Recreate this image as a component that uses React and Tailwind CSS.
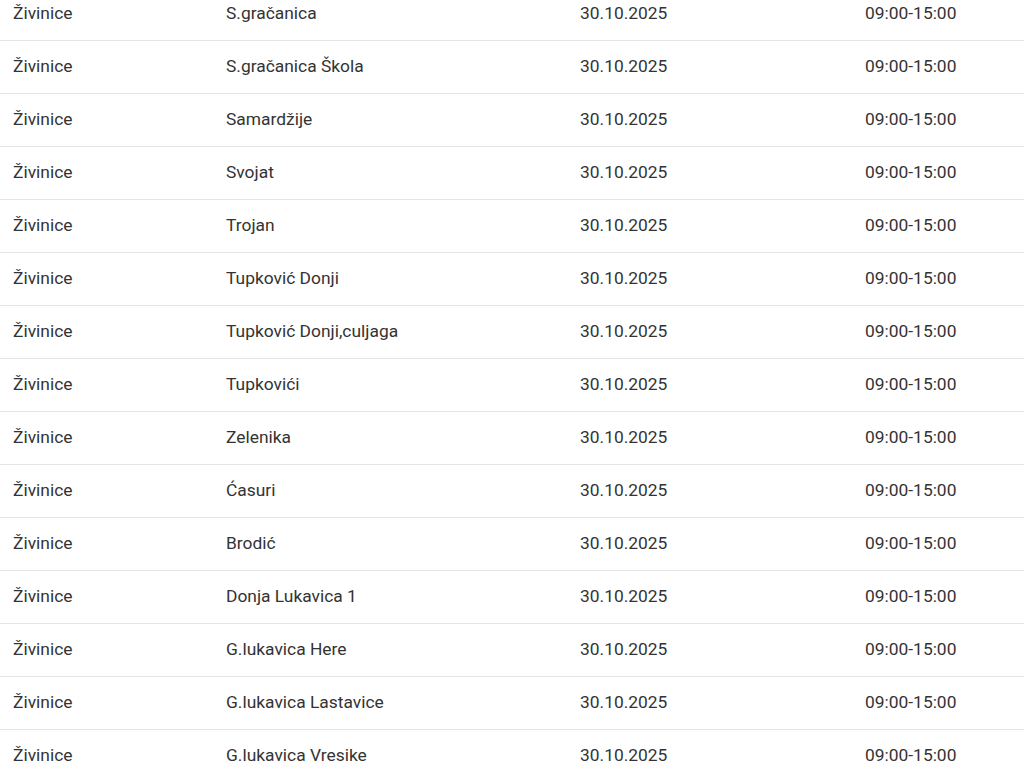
const places = [
  "S.gračanica",
  "S.gračanica Škola",
  "Samardžije",
  "Svojat",
  "Trojan",
  "Tupković Donji",
  "Tupković Donji,culjaga",
  "Tupkovići",
  "Zelenika",
  "Ćasuri",
  "Brodić",
  "Donja Lukavica 1",
  "G.lukavica Here",
  "G.lukavica Lastavice",
  "G.lukavica Vresike",
];

export default function App() {
  return (
    <div className="w-[1024px] h-[782px] overflow-hidden bg-white font-['Roboto',sans-serif] text-[17.4px] text-[#333333]">
      <div className="-mt-[12px]">
        {places.map((p, i) => (
          <div
            key={i}
            className="grid grid-cols-[213px_354px_285px_1fr] h-[53px] pb-[2px] items-center border-b border-[#e5e5e5]"
          >
            <div className="pl-[13px]">Živinice</div>
            <div className="pl-[13px]">{p}</div>
            <div className="pl-[13px]">30.10.2025</div>
            <div className="pl-[13px]">09:00-15:00</div>
          </div>
        ))}
      </div>
    </div>
  );
}
